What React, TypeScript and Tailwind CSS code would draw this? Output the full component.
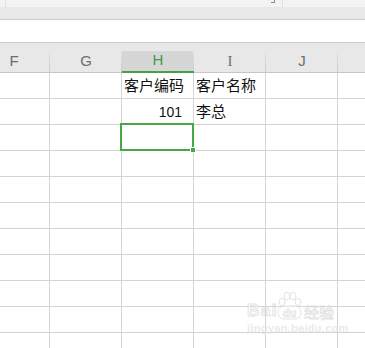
import React from "react";

const cols = ["F", "G", "H", "I", "J", ""];
const rows = 11;

const cellText: Record<string, { text: string; align: "left" | "right" }> = {
  "0-2": { text: "客户编码", align: "left" },
  "0-3": { text: "客户名称", align: "left" },
  "1-2": { text: "101", align: "right" },
  "1-3": { text: "李总", align: "left" },
};

const widths = ["w-[50px]", "w-[72px]", "w-[72px]", "w-[72px]", "w-[72px]", "flex-1"];

export default function App() {
  return (
    <div
      className="relative w-[365px] h-[348px] overflow-hidden bg-white"
      style={{ fontFamily: '"Liberation Sans", "Noto Sans CJK SC", sans-serif' }}
    >
      {/* top strip */}
      <div className="h-[7px] bg-[#f3f3f3] flex">
        <div className="w-[5px]" />
        <div className="w-px bg-[#e2e2e2]" />
        <div className="w-[267px] relative">
          <div className="absolute right-[-2px] top-0 w-[4px] h-[3px] border-r border-b border-[#8a8a8a]" />
        </div>
        <div className="w-[9px]" />
        <div className="w-px bg-[#dedede]" />
      </div>
      {/* ribbon band */}
      <div className="h-[13px] bg-[#e8e8e8] border-b border-[#cdcdcd]" />
      {/* formula bar area */}
      <div className="h-[22px] bg-white" />
      {/* column header */}
      <div className="border-t border-[#cbcbcb] bg-[#e8e8e8] pt-[8px]">
        <div className="flex h-[22px]">
          {cols.map((c, i) => {
            const sel = c === "H";
            return (
              <div
                key={i}
                className={`${widths[i]} shrink-0 relative flex ${
                  i === 0 ? "justify-end" : "justify-center"
                } items-center ${sel ? "bg-[#d6d6d6] border-b-2 border-[#43a447]" : "border-b border-[#c6c6c6]"}`}
              >
                <div
                  className={`${i === 0 ? "w-[72px] shrink-0 text-center" : ""} text-[15px] ${
                    sel ? "text-[#3c9c48] pb-[1px]" : "text-[#6d6d6d]"
                  }`}
                  style={c === "I" ? { fontFamily: '"Liberation Serif", serif' } : undefined}
                >
                  {c}
                </div>
                {i < 5 && (
                  <div className="absolute right-0 top-0 bottom-0 w-px bg-gradient-to-b from-[#e4e4e4] to-[#c9c9c9]" />
                )}
              </div>
            );
          })}
        </div>
      </div>
      {/* grid rows */}
      <div className="flex flex-col">
        {Array.from({ length: rows }).map((_, r) => (
          <div key={r} className="flex h-[26px] border-b border-[#d4d4d4]">
            {cols.map((_, ci) => {
              const t = cellText[`${r}-${ci}`];
              return (
                <div
                  key={ci}
                  className={`${widths[ci]} shrink-0 flex items-center ${
                    ci < 5 ? "border-r border-[#d4d4d4]" : ""
                  } ${t && t.align === "right" ? "justify-end pr-[11px]" : "pl-[2px]"}`}
                >
                  {t && (
                    <span
                      className={`${t.align === "right" ? "text-[14px]" : "text-[15px]"} text-[#111] leading-none`}
                    >
                      {t.text}
                    </span>
                  )}
                </div>
              );
            })}
          </div>
        ))}
      </div>
      {/* selection box */}
      <div className="absolute left-[120px] top-[123px] w-[74px] h-[28px] border-2 border-[#45a845]" />
      <div className="absolute left-[190px] top-[147px] w-[6px] h-[6px] bg-[#45a845] border border-white" />
      {/* watermark */}
      <div className="absolute left-[247px] top-[291px] w-[92px] h-[44px] pointer-events-none opacity-75">
        <div className="flex items-end h-[29px]">
          <span
            className="text-[17px] font-bold leading-none text-white tracking-[1.5px] mb-[1px]"
            style={{ WebkitTextStroke: "1px #dadada" }}
          >
            Bai
          </span>
          <div className="relative w-[27px] h-[29px] -ml-[2px]">
            <svg width="27" height="29" viewBox="0 0 27 29" className="absolute inset-0">
              <g fill="white" stroke="#dadada" strokeWidth="1">
                <ellipse cx="6" cy="11" rx="3" ry="3.5" />
                <ellipse cx="11" cy="5" rx="3" ry="3.8" />
                <ellipse cx="17" cy="5" rx="3" ry="3.8" />
                <ellipse cx="22" cy="11" rx="3" ry="3.5" />
                <rect x="2" y="15" width="23" height="13" rx="6" />
              </g>
              <text x="13.5" y="26" textAnchor="middle" fontSize="11" fontWeight="bold" fill="white" stroke="#dadada" strokeWidth="0.8" fontFamily="Liberation Sans, sans-serif">du</text>
            </svg>
          </div>
          <span
            className="text-[15px] leading-none text-white ml-[1px] mb-[1px]"
            style={{ WebkitTextStroke: "0.8px #dadada", fontFamily: '"Noto Sans CJK SC", sans-serif' }}
          >
            经验
          </span>
        </div>
        <div className="text-[11px] leading-none mt-[3px] text-[#e4e4e4] font-bold tracking-[0.3px]">
          jingyan.baidu.com
        </div>
      </div>
    </div>
  );
}
